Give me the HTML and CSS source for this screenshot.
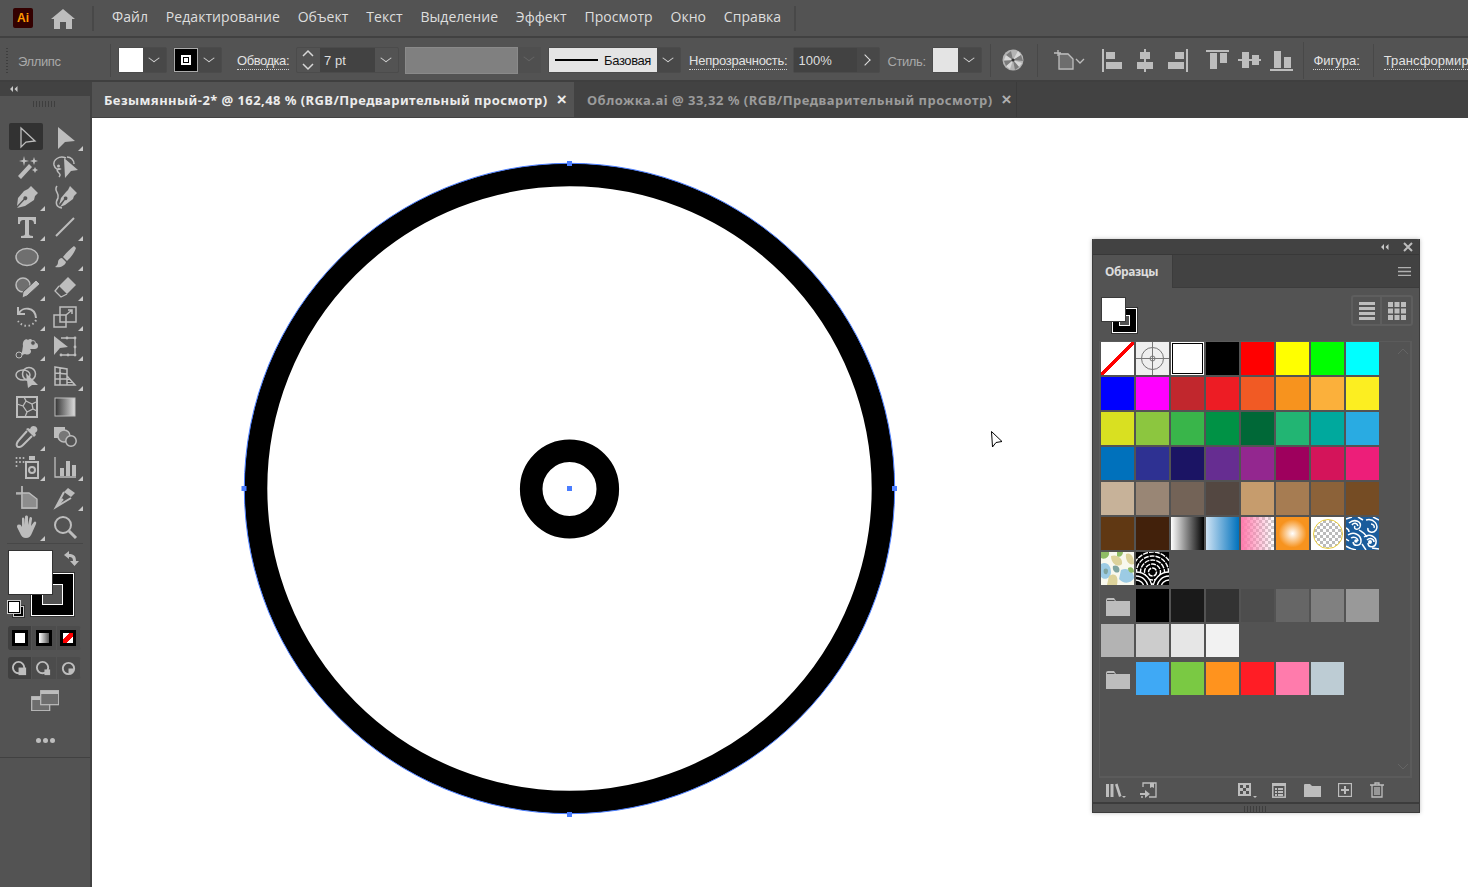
FILE: index.html
```html
<!DOCTYPE html>
<html lang="ru">
<head>
<meta charset="utf-8">
<title>Adobe Illustrator</title>
<link rel="stylesheet" href="styles.css">
</head>
<body>
<header class="menubar">
  <div class="ai-logo">Ai</div>
  <svg class="home" viewBox="0 0 24 20"><path d="M12 0 L24 10 L21 10 L21 20 L15 20 L15 13 L9 13 L9 20 L3 20 L3 10 L0 10Z"/></svg>
  <span class="vsep menu-sep"></span>
  <nav class="menu">
    <span>Файл</span><span>Редактирование</span><span>Объект</span><span>Текст</span><span>Выделение</span><span>Эффект</span><span>Просмотр</span><span>Окно</span><span>Справка</span>
  </nav>
  <span class="vsep menu-sep2"></span>
</header>

<section class="control">
  <span class="grip-v"></span>
  <span class="ctl-label shape-name">Эллипс</span>
  <span class="vsep c-sep1"></span>
  <div class="combo fillc"><span class="sw-white"></span><span class="chev"></span></div>
  <div class="combo strokec"><span class="sw-black"><i></i></span><span class="chev"></span></div>
  <span class="link-label ob">Обводка:</span>
  <div class="combo stepper">
    <span class="updown"><svg viewBox="0 0 12 22"><path d="M1 7 L6 2 L11 7 M1 15 L6 20 L11 15"/></svg></span>
    <span class="value v7">7 pt</span><span class="chev"></span>
  </div>
  <div class="graybox"></div><div class="dis-chev"><span class="chev dim"></span></div>
  <div class="combo linec"><span class="linebox"><i></i><b>Базовая</b></span><span class="chev"></span></div>
  <span class="link-label op">Непрозрачность:</span>
  <div class="combo opac"><span class="value v100">100%</span><span class="arrow-r"></span></div>
  <span class="ctl-label stl">Стиль:</span>
  <div class="combo stylec"><span class="sw-style"></span><span class="chev"></span></div>
  <span class="vsep c-sep2"></span>
  <svg class="globe" viewBox="0 0 22 22"><circle cx="11" cy="11" r="10.5" fill="#b4b4b4"/><path d="M11 11 L4 6 L2 11Z M11 11 L16 2 L19 6Z M11 11 L20 14 L17 18Z M11 11 L8 20 L4 17Z" fill="#d8d8d8"/><path d="M11 11 L9 2 L4 6Z M11 11 L19 6 L21 12Z M11 11 L13 21 L17 18Z M11 11 L2 12 L4 17Z" fill="#7c7c7c"/><circle cx="11" cy="11" r="1.6" fill="#333"/></svg>
  <span class="vsep c-sep3"></span>
  <svg class="artb" viewBox="0 0 32 22"><path class="ic-s" d="M1 4 H8 M5 1 V7"/><path class="ic-f" d="M6 4 H15 L20 9 V19 H6Z" fill-opacity=".25"/><path class="ic-s" d="M6 5 H15 L20 10 V20 H6Z"/><path class="ic-s" d="M23 10 L27 14 L31 10"/></svg>
  <div class="aligns">
    <svg viewBox="0 0 24 24"><path d="M1 1 H3 V24 H1Z M5 4 H14 V11 H5Z M5 14 H21 V21 H5Z"/></svg>
    <svg viewBox="0 0 24 24"><path d="M11 1 H13 V24 H11Z M7 4 H17 V11 H7Z M4 14 H20 V21 H4Z"/></svg>
    <svg viewBox="0 0 24 24"><path d="M21 1 H23 V24 H21Z M10 4 H19 V11 H10Z M3 14 H19 V21 H3Z"/></svg>
    <svg class="gap-l" viewBox="0 0 24 24"><path d="M1 2 H24 V4 H1Z M5 5 H12 V21 H5Z M15 5 H22 V15 H15Z"/></svg>
    <svg viewBox="0 0 24 24"><path d="M1 11 H24 V13 H1Z M5 4 H12 V20 H5Z M15 7 H22 V17 H15Z"/></svg>
    <svg viewBox="0 0 24 24"><path d="M1 21 H24 V23 H1Z M5 3 H12 V20 H5Z M15 9 H22 V20 H15Z"/></svg>
  </div>
  <span class="vsep c-sep4"></span>
  <span class="link-label fig">Фигура:</span>
  <span class="vsep c-sep5"></span>
  <span class="link-label trf">Трансформирование</span>
</section>

<div class="workspace">
  <aside class="toolbar">
    <div class="tb-head"><svg class="dbl" viewBox="0 0 8 6"><path d="M0 3 L3 0 V6Z M4.500 3 L7.500 0 V6Z"/></svg></div>
    <div class="tb-grip"><span class="grip-h"></span></div>
    <div class="tools">
      <div class="tool active"><svg viewBox="0 0 24 24"><path class="ic-s" d="M6 3 L20 16 L11 17 L6 22Z"/></svg></div>
      <div class="tool tri"><svg viewBox="0 0 24 24"><path d="M5 2 L22 16 L12 17 L5 24Z"/></svg></div>
      <div class="tool"><svg viewBox="0 0 24 24"><path d="M3 21 L14 9 L17 12 L6 24Z M9 1 L10 5 L14 6 L10 7 L9 11 L8 7 L4 6 L8 5Z M19 2 L20 5 L23 6 L20 7 L19 10 L18 7 L15 6 L18 5Z M20 12 L21 14 L23 15 L21 16 L20 18 L19 16 L17 15 L19 14Z"/></svg></div>
      <div class="tool"><svg viewBox="0 0 24 24"><path class="ic-s w15" d="M13 3 C6 0 0 5 1 10 C2 14 5 15 7 14 C5 13 3 15 5 17 C7 19 8 20 6 22"/><circle cx="5.500" cy="11" r="1.500"/><path d="M11 3 L25 15 L18 16 L12 23Z"/><path class="ic-s w15" d="M14 2 C18 2 21 5 21 9"/></svg></div>
      <div class="tool tri"><svg viewBox="0 0 24 24"><path d="M16 1 L23 8 L20 11 L19 15 L10 21 L2 23 L9.500 15 A2 2 0 1 0 8.500 14 L2 21 L3 13 L9 6 L13 4Z"/></svg></div>
      <div class="tool"><svg viewBox="0 0 24 24"><path d="M17 1 L24 8 L21 11 L20 14 L12 20 L7 22 L12 15 A1.800 1.800 0 1 0 11 14 L6 20 L8 13 L13 7 L15 5Z"/><path class="ic-s w15" d="M4 1 C0 6 7 8 5 13 C2 18 3 22 9 23"/></svg></div>
      <div class="tool tri"><svg viewBox="0 0 24 24"><path d="M3 2 H21 V9 H19 C19 6 18 5 15 5 H14 V19 C14 20 15 21 18 21 V23 H6 V21 C9 21 10 20 10 19 V5 H9 C6 5 5 6 5 9 H3Z"/></svg></div>
      <div class="tool tri"><svg viewBox="0 0 24 24"><path class="ic-s w2" d="M3 21 L21 3"/></svg></div>
      <div class="tool tri"><svg viewBox="0 0 24 24"><ellipse class="ic-e" cx="12" cy="12" rx="11" ry="8.500"/></svg></div>
      <div class="tool tri"><svg viewBox="0 0 24 24"><path d="M21 1 L23 3 C21 9 17 13 14 16 L10 12 C13 8 17 4 21 1Z M9 13 L13 17 C12 21 7 23 2 22 C5 20 5 18 5 17 C5 15 7 13 9 13Z"/></svg></div>
      <div class="tool tri"><svg viewBox="0 0 24 24"><circle class="ic-e" cx="8" cy="10" r="7"/><path d="M21 5 L25 9 L12 21 L7 23 L8 17Z" stroke="#535353"/></svg></div>
      <div class="tool tri"><svg viewBox="0 0 24 24"><path d="M15 2 L23 10 L14 19 L6 11Z"/><path class="ic-s" d="M6 11 L2 16 L8 22 L14 19"/></svg></div>
      <div class="tool tri"><svg viewBox="0 0 24 24"><path class="ic-s w2" d="M4 8 C7 2 20 1 21 13"/><path class="ic-s w2" d="M3 2 V9 H10"/><path class="ic-s w2" stroke-dasharray="1.500 2.600" d="M21 15 C18 22 8 23 3 16"/></svg></div>
      <div class="tool tri"><svg viewBox="0 0 24 24"><rect class="ic-s w15" x="7" y="2" width="16" height="15"/><rect class="ic-s w15" x="1" y="10" width="12" height="12"/><path d="M13 10 L19 5 M15 5 H19 V9" class="ic-s w15"/></svg></div>
      <div class="tool tri"><svg viewBox="0 0 24 24"><path d="M3 19 C8 20 7 15 8 11 C7 6 11 3 13 5 C15 3 18 4 17 7 C20 8 23 7 23 11 C23 15 18 14 15 14 C18 17 14 21 10 19 C8 19 6 22 3 22Z"/><circle cx="4" cy="20" r="3" fill="#535353" stroke="#bdbdbd"/><circle cx="18" cy="8" r="2.400" fill="#535353" stroke="#bdbdbd"/></svg></div>
      <div class="tool tri"><svg viewBox="0 0 24 24"><path d="M1 1 L15 12 L7 13 L1 20Z"/><path class="ic-s" d="M8 3 H22 V20 H8"/><g class="dots"><circle cx="14" cy="3" r="1.400"/><circle cx="22" cy="3" r="1.400"/><circle cx="22" cy="12" r="1.400"/><circle cx="22" cy="20" r="1.400"/><circle cx="15" cy="20" r="1.400"/><circle cx="8" cy="20" r="1.400"/></g></svg></div>
      <div class="tool tri"><svg viewBox="0 0 24 24"><ellipse class="ic-s w15" cx="8" cy="10" rx="7" ry="5"/><circle class="ic-s w15" cx="14" cy="9" r="6.500"/><path d="M11 8 L23 20 L17 20 L13 23Z"/></svg></div>
      <div class="tool tri"><svg viewBox="0 0 24 24"><path class="ic-s w15" d="M2 2 L14 4 V20 H2Z M2 8 L14 9 M2 14 H14 M7 3 V20 M14 11 L22 20 H14"/><path d="M14 14 H18 V15 H14Z M14 17 H20 V18 H14Z"/></svg></div>
      <div class="tool"><svg viewBox="0 0 24 24"><rect class="ic-s w2" x="2" y="2" width="20" height="20"/><path class="ic-s" d="M2 9 L8 11 L11 6 L9 2 M11 6 L17 9 L21 7 M8 11 L12 17 L10 22 M12 17 L18 14 L22 16 M17 9 L18 14"/></svg></div>
      <div class="tool"><svg viewBox="0 0 24 24"><defs><linearGradient id="gtool"><stop offset="0" stop-color="#333"/><stop offset="1" stop-color="#ddd"/></linearGradient></defs><rect x="2" y="3" width="20" height="18" fill="url(#gtool)" stroke="#bdbdbd"/></svg></div>
      <div class="tool tri"><svg viewBox="0 0 24 24"><path d="M16 2 C18 0 21 1 22 3 C23 5 22 7 20 8 L21 10 L19 12 L11 4 L13 3 L15 4Z"/><path class="ic-s w2" d="M12 6 L4 15 C2 17 1 20 2 21 C3 23 6 22 8 20 L17 11"/></svg></div>
      <div class="tool"><svg viewBox="0 0 24 24"><rect x="1" y="2" width="11" height="11"/><circle cx="11" cy="11" r="6" fill="#777" stroke="#bdbdbd" stroke-width="1.500"/><circle cx="18" cy="16" r="5.200" fill="#535353" stroke="#bdbdbd" stroke-width="1.500"/></svg></div>
      <div class="tool tri"><svg viewBox="0 0 24 24"><g class="dots"><circle cx="1.500" cy="3" r="1"/><circle cx="5" cy="3" r="1"/><circle cx="8.500" cy="3" r="1"/><circle cx="1.500" cy="7" r="1"/><circle cx="5" cy="7" r="1"/><circle cx="8.500" cy="7" r="1"/><circle cx="1.500" cy="11" r="1"/></g><path d="M14 1 H20 V5 H14Z"/><rect class="ic-s w2" x="11" y="7" width="12" height="16"/><circle class="ic-s w2" cx="17" cy="15" r="3"/></svg></div>
      <div class="tool tri"><svg viewBox="0 0 24 24"><path class="ic-s" d="M2 2 V22 H23"/><path d="M7 13 H11 V21 H7Z M13 6 H17 V21 H13Z M19 10 H23 V21 H19Z"/></svg></div>
      <div class="tool"><svg viewBox="0 0 24 24"><path d="M6 1 H8 V8 H15 L22 14 V24 H6 V10 H1 V8 H6Z" fill-opacity=".55"/><path class="ic-s" d="M1 8 H14 L22 14 V23 H7 V1"/></svg></div>
      <div class="tool tri"><svg viewBox="0 0 24 24"><path d="M15 3 L22 8 L18 12 L11 7Z"/><path class="ic-s w2" d="M11 7 L3 22 L18 13 M3 22 L10 14"/></svg></div>
      <div class="tool tri"><svg viewBox="0 0 24 24"><path d="M4 10 C5 9 6 10 7 12 L7 4 C7 2 9 2 9.500 4 L10 10 L10 2 C10 0 13 0 13 2 L13 10 L14.500 3 C15 1 17.500 2 17 4 L16 11 L19 7 C20 5.500 22 7 21 9 L17 18 C16 21 14 23 11 23 C8 23 6 21 5 18 L2 12 C2 10 3 9 4 10Z"/></svg></div>
      <div class="tool"><svg viewBox="0 0 24 24"><circle class="ic-s w2" cx="10" cy="10" r="8"/><path class="ic-s w3" d="M16 16 L23 23"/></svg></div>
    </div>
    <hr class="tb-div">
    <div class="well">
      <div class="well-stroke"><i></i></div>
      <div class="well-fill"></div>
      <svg class="swap" viewBox="0 0 16 16"><path d="M1 4 L6 0 V3 C11 3 13 5 13 10 H16 L11.500 15 L7 10 H10 C10 7 9 6 6 6 V8Z"/></svg>
      <div class="mini"><span class="mini-s"></span><span class="mini-f"></span></div>
    </div>
    <div class="btn-row mode-a">
      <span class="on"><i class="box-fill"></i></span><span><i class="box-grad"></i></span><span><i class="box-none"></i></span>
    </div>
    <div class="btn-row mode-b">
      <span class="on"><svg viewBox="0 0 18 18"><circle class="ic-s w2" cx="8" cy="8" r="6"/><rect x="8" y="8" width="8" height="8"/></svg></span>
      <span><svg viewBox="0 0 18 18"><circle class="ic-s w2" cx="8" cy="8" r="6"/><rect x="10" y="10" width="6" height="6"/></svg></span>
      <span><svg viewBox="0 0 18 18"><circle class="ic-s w2" cx="9" cy="9" r="6"/><path d="M9 9 H15 A6 6 0 0 1 9 15Z"/></svg></span>
    </div>
    <svg class="screenmode" viewBox="0 0 28 21"><rect x="0.700" y="6.700" width="18" height="14" fill="#6e6e6e" stroke="#bdbdbd" stroke-width="1.200"/><rect x="9.700" y="0.700" width="18" height="14" fill="#6e6e6e" stroke="#bdbdbd" stroke-width="1.200"/><rect x="10" y="1" width="17.500" height="3" fill="#bdbdbd"/><rect x="1" y="7" width="8" height="3" fill="#bdbdbd"/></svg>
    <div class="more"><i></i><i></i><i></i></div>
    <hr class="tb-div2">
  </aside>

  <main class="doc">
    <div class="tabs">
      <div class="tab tab-on"><span>Безымянный-2* @ 162,48 % (RGB/Предварительный просмотр)</span><b>×</b></div>
      <div class="tab tab-off"><span>Обложка.ai @ 33,32 % (RGB/Предварительный просмотр)</span><b>×</b></div>
    </div>
    <div class="canvas">
      <svg class="art" viewBox="92 118 1376 769">
        <circle cx="569.500" cy="488.500" r="313.600" fill="#fff" stroke="#000" stroke-width="22.800"/>
        <circle cx="569.500" cy="489" r="38.300" fill="#fff" stroke="#000" stroke-width="22.600"/>
        <circle cx="569.500" cy="488.500" r="325.200" fill="none" stroke="#4a7dff" stroke-width="1"/>
        <path fill="#4a7dff" d="M567 161 h5 v5 h-5Z M567 812 h5 v5 h-5Z M241.500 486 h5 v5 h-5Z M892 486 h5 v5 h-5Z M567 486 h5 v5 h-5Z"/>
        <path d="M991.500 431.500 L1002 441.500 L996 442.500 L992.500 447Z" fill="#fff" stroke="#000" stroke-width="1"/>
      </svg>

      <aside class="panel">
        <div class="p-top"><svg class="dbl" viewBox="0 0 8 6"><path d="M0 3 L3 0 V6Z M4.500 3 L7.500 0 V6Z"/></svg><svg class="p-x" viewBox="0 0 10 10"><path d="M1 1 L9 9 M9 1 L1 9"/></svg></div>
        <div class="p-tabs">
          <div class="p-tab">Образцы</div>
          <svg class="p-menu" viewBox="0 0 13 9"><path d="M0 0.500 H13 M0 4.500 H13 M0 8.500 H13"/></svg>
        </div>
        <div class="p-tools">
          <div class="p-well"><span class="pw-s"><i></i></span><span class="pw-f"></span></div>
          <div class="viewbtns">
            <span><svg viewBox="0 0 16 18"><path d="M0 0 H16 V3 H0Z M0 5 H16 V8 H0Z M0 10 H16 V13 H0Z M0 15 H16 V18 H0Z"/></svg></span>
            <span><svg viewBox="0 0 18 18"><path d="M0 0 H5 V5 H0Z M6.500 0 H11.500 V5 H6.500Z M13 0 H18 V5 H13Z M0 6.500 H5 V11.500 H0Z M6.500 6.500 H11.500 V11.500 H6.500Z M13 6.500 H18 V11.500 H13Z M0 13 H5 V18 H0Z M6.500 13 H11.500 V18 H6.500Z M13 13 H18 V18 H13Z"/></svg></span>
          </div>
        </div>
        <div class="list">
          <div class="swgrid">
            <span class="sw s-none"></span>
            <span class="sw s-reg"><svg viewBox="0 0 33 33"><path d="M0 16.500 H33 M16.500 0 V33" stroke="#777" fill="none"/><circle cx="16.500" cy="16.500" r="11" fill="none" stroke="#777"/><circle cx="16.500" cy="16.500" r="2.500" fill="none" stroke="#777"/></svg></span>
            <span class="sw s-whitebox"></span>
            <span class="sw" style="background:#000"></span><span class="sw" style="background:#f00"></span><span class="sw" style="background:#ff0"></span><span class="sw" style="background:#0f0"></span><span class="sw" style="background:#0ff"></span>
            <span class="sw" style="background:#00f"></span><span class="sw" style="background:#f0f"></span><span class="sw" style="background:#c1272d"></span><span class="sw" style="background:#ed1c24"></span><span class="sw" style="background:#f15a24"></span><span class="sw" style="background:#f7931e"></span><span class="sw" style="background:#fbb03b"></span><span class="sw" style="background:#fcee21"></span>
            <span class="sw" style="background:#d9e021"></span><span class="sw" style="background:#8cc63f"></span><span class="sw" style="background:#39b54a"></span><span class="sw" style="background:#009245"></span><span class="sw" style="background:#006837"></span><span class="sw" style="background:#22b573"></span><span class="sw" style="background:#00a99d"></span><span class="sw" style="background:#29abe2"></span>
            <span class="sw" style="background:#0071bc"></span><span class="sw" style="background:#2e3192"></span><span class="sw" style="background:#1b1464"></span><span class="sw" style="background:#662d91"></span><span class="sw" style="background:#93278f"></span><span class="sw" style="background:#9e005d"></span><span class="sw" style="background:#d4145a"></span><span class="sw" style="background:#ed1e79"></span>
            <span class="sw" style="background:#c7b299"></span><span class="sw" style="background:#998675"></span><span class="sw" style="background:#736357"></span><span class="sw" style="background:#534741"></span><span class="sw" style="background:#c69c6d"></span><span class="sw" style="background:#a67c52"></span><span class="sw" style="background:#8c6239"></span><span class="sw" style="background:#754c24"></span>
            <span class="sw" style="background:#603813"></span><span class="sw" style="background:#42210b"></span>
            <span class="sw s-g1"></span><span class="sw s-g2"></span><span class="sw s-g3"></span><span class="sw s-g4"></span>
            <span class="sw s-ring"><i></i></span>
            <span class="sw s-swirl"><svg viewBox="0 0 33 33"><rect width="33" height="33" fill="#1a5c9c"/><g fill="none" stroke="#fff" stroke-width="1.500"><path d="M3 6 C9 1 16 5 14 10 C12 14 7 12 9 9"/><path d="M20 3 C28 1 33 8 30 13 C27 17 21 15 22 11"/><path d="M2 18 C8 14 15 18 15 24 C15 29 8 30 7 25"/><path d="M18 20 C24 16 31 20 30 26 C29 31 22 31 22 26"/><path d="M0 29 C3 31 6 32 10 33 M13 13 C16 15 19 16 21 20 M0 11 C2 12 3 14 3 15 M0 2 L6 0 M12 0 L17 3 M27 0 L33 3 M16 27 L20 33 M26 31 L33 32 M0 22 L3 24"/><path d="M6 8 C8 5 11 6 12 9 M25 7 C27 7 29 9 28 11 M5 21 C8 19 12 21 12 24 M21 23 C24 20 28 22 28 25"/></g><circle cx="24" cy="25" r="2" fill="#fff"/><circle cx="10" cy="24" r="1.800" fill="#fff"/></svg></span>
            <span class="sw s-camo"><svg viewBox="0 0 33 33"><rect width="33" height="33" fill="#f8f8ee"/><path fill="#9ccbe4" d="M0 12 C6 9 10 14 10 20 C10 26 4 29 0 25Z M20 18 C26 15 33 19 33 26 C30 32 22 32 18 27Z"/><path fill="#dcd29a" d="M10 4 C16 2 22 6 21 12 C17 16 10 12 10 4Z M8 24 C14 20 18 24 16 33 H6Z M25 2 C29 0 33 4 33 12 C28 14 24 8 25 2Z"/><path fill="#8fbc65" d="M0 0 H8 C9 5 4 8 0 6Z M16 0 H22 C22 4 18 6 16 4Z M27 16 C30 14 33 16 33 20 C30 22 27 20 27 16Z"/><path fill="#7fa5a0" d="M12 14 C16 12 20 16 18 20 C14 22 11 18 12 14Z M3 17 C7 15 8 19 6 22 C3 23 2 20 3 17Z"/></svg></span>
            <span class="sw s-wave"><svg viewBox="0 0 33 33"><rect width="33" height="33" fill="#000"/><g fill="none" stroke="#fff" stroke-width="1.400" stroke-dasharray="5 1"><circle cx="16.500" cy="20" r="4"/><circle cx="16.500" cy="20" r="8"/><circle cx="16.500" cy="20" r="12"/><circle cx="16.500" cy="20" r="16"/><circle cx="16.500" cy="20" r="20"/></g><g fill="#000" stroke="#fff" stroke-width="1.400"><circle cx="0" cy="36" r="16"/><circle cx="33" cy="36" r="16"/></g><g fill="none" stroke="#fff" stroke-width="1.400"><circle cx="0" cy="36" r="12"/><circle cx="0" cy="36" r="8"/><circle cx="33" cy="36" r="12"/><circle cx="33" cy="36" r="8"/></g></svg></span>
          </div>
          <div class="swgrid group">
            <span class="folder"><svg viewBox="0 0 24 18"><path d="M0 2 Q0 0 2 0 H8 L10 3 H24 V18 H0Z"/><path d="M1 2 H8 L9 3 H1Z" fill="#535353"/></svg></span>
            <span class="sw" style="background:#000"></span><span class="sw" style="background:#1a1a1a"></span><span class="sw" style="background:#333"></span><span class="sw" style="background:#4d4d4d"></span><span class="sw" style="background:#666"></span><span class="sw" style="background:#808080"></span><span class="sw" style="background:#999"></span>
            <span class="sw" style="background:#b3b3b3"></span><span class="sw" style="background:#ccc"></span><span class="sw" style="background:#e6e6e6"></span><span class="sw" style="background:#f2f2f2"></span>
          </div>
          <div class="swgrid group">
            <span class="folder"><svg viewBox="0 0 24 18"><path d="M0 2 Q0 0 2 0 H8 L10 3 H24 V18 H0Z"/><path d="M1 2 H8 L9 3 H1Z" fill="#535353"/></svg></span>
            <span class="sw" style="background:#3fa9f5"></span><span class="sw" style="background:#7ac943"></span><span class="sw" style="background:#ff931e"></span><span class="sw" style="background:#ff1d25"></span><span class="sw" style="background:#ff7bac"></span><span class="sw" style="background:#bdccd4"></span>
          </div>
          <svg class="sc-up" viewBox="0 0 10 6"><path d="M0 6 L5 1 L10 6"/></svg>
          <svg class="sc-down" viewBox="0 0 10 6"><path d="M0 0 L5 5 L10 0"/></svg>
        </div>
        <div class="p-foot">
          <svg class="f-a" viewBox="0 0 20 15"><path d="M0 1 H3 V14 H0Z M4.500 1 H7.500 V14 H4.500Z M9 1.500 L11.500 0.500 L15.500 13 L13 14Z M16 13 H20 L18 15Z"/></svg>
          <svg class="f-b" viewBox="0 0 17 16"><path class="ic-s" d="M3 5 V1 H16 V15 H9 M3 15 H1"/><path d="M10 1 H14 V6 L12 5 L10 6Z M0 11 H5 V8 L10 12 L5 16 V13 H0Z"/></svg>
          <svg class="f-c" viewBox="0 0 20 15"><path d="M0 0 H13 V13 H0Z"/><path fill="#535353" d="M2 2 H5 V5 H2Z M8 2 H11 V5 H8Z M5 5 H8 V8 H5Z M8 8 H11 V11 H8Z M2 8 H5 V11 H2Z"/><path d="M15 13 H19 L17 15Z"/></svg>
          <svg class="f-d" viewBox="0 0 14 15"><rect class="ic-s w15" x="0.800" y="0.800" width="12.400" height="13.400"/><path d="M0 0 H14 V3 H0Z M3 5 H5 V7 H3Z M6 5 H11 V7 H6Z M3 8 H5 V10 H3Z M6 8 H11 V10 H6Z M3 11 H5 V13 H3Z M6 11 H11 V13 H6Z"/></svg>
          <svg class="f-e" viewBox="0 0 17 13"><path d="M0 1 Q0 0 1 0 H6 L8 2 H17 V13 H0Z"/></svg>
          <svg class="f-f" viewBox="0 0 14 14"><rect class="ic-s" x="0.500" y="0.500" width="13" height="13"/><path d="M6 3 H8 V6 H11 V8 H8 V11 H6 V8 H3 V6 H6Z"/></svg>
          <svg class="f-g" viewBox="0 0 14 16"><path class="ic-s" d="M0 3 H14 M5 3 V1 H9 V3 M2 3 V15 H12 V3 M5 5 V13 M7 5 V13 M9 5 V13"/></svg>
        </div>
        <div class="p-grip"><span class="grip-h dark"></span></div>
      </aside>
    </div>
  </main>
</div>
</body>
</html>
```

FILE: styles.css
```css
* { box-sizing: border-box; }
html, body { margin: 0; height: 100%; overflow: hidden; }
body { background: #535353; color: #dcdcdc; font-family: "Noto Sans", sans-serif; font-size: 13px; width: 1468px; height: 887px; }

svg { display: block; fill: #bdbdbd; }
.ic-s { fill: none; stroke: #bdbdbd; stroke-width: 1.3; }
.ic-s.w2 { stroke-width: 2; }
.ic-s.w3 { stroke-width: 3; }
.ic-s.w15 { stroke-width: 1.5; }
.ic-f { fill: #bdbdbd; }
.ic-e { fill: #6f6f6f; stroke: #bdbdbd; stroke-width: 1.5; }
.dots { fill: #bdbdbd; }
.tool svg { overflow: visible; }

.vsep { display: block; width: 1px; background: #484848; flex: none; }

/* menu bar */
.menubar { height: 38px; border-bottom: 2px solid #414141; display: flex; align-items: center; position: relative; }
.ai-logo { width: 20px; height: 20px; margin-left: 13px; background: #330000; color: #ff9a00; font: bold 12px/20px "Liberation Sans", sans-serif; text-align: center; border-radius: 2px; }
.home { width: 24px; height: 20px; margin-left: 18px; margin-top: 2px; }
.menu-sep { height: 25px; margin-left: 17px; width: 2px; }
.menu-sep2 { height: 25px; margin-left: 13px; width: 2px; }
.menu { display: flex; gap: 17.8px; margin-left: 18px; margin-top: -3px; font-size: 14px; letter-spacing: .05px; color: #dedede; font-family: "Open Sans", sans-serif; }

/* control bar */
.control { height: 44px; border-bottom: 2px solid #3f3f3f; display: flex; align-items: center; overflow: hidden; font-family: "Liberation Sans", sans-serif; padding-top: 2px; }
.grip-v { width: 2px; height: 25px; margin-left: 6px; flex: none; background: repeating-linear-gradient(#3e3e3e 0 1px, transparent 1px 3px); }
.ctl-label { color: #a9a9a9; font-size: 13px; letter-spacing: -0.4px; flex: none; margin-top: 2px; }
.shape-name { margin-left: 10px; width: 84px; }
.c-sep1 { height: 33px; margin-left: 8px; }
.combo { display: flex; align-items: center; height: 26px; background: #484848; border: 1px solid #4b4b4b; border-radius: 2px; flex: none; }
.chev { width: 23px; height: 24px; position: relative; flex: none; }
.chev::after { content: ""; position: absolute; left: 7px; top: 6px; width: 7px; height: 7px; border-right: 1.6px solid #d8d8d8; border-bottom: 1.6px solid #d8d8d8; transform: scaleY(.75) rotate(45deg); }
.chev.dim::after { border-color: #666; }
.fillc { margin-left: 7px; }
.sw-white { width: 24px; height: 24px; background: #fff; flex: none; }
.strokec { margin-left: 6px; }
.sw-black { width: 24px; height: 24px; background: #000; border: 1px solid #aaa; display: flex; align-items: center; justify-content: center; flex: none; }
.sw-black i { width: 10px; height: 10px; border: 2px solid #fff; background: #000; display: block; box-shadow: inset 0 0 0 1px #000, inset 0 0 0 4px #fff; }
.link-label { flex: none; font-size: 13px; color: #e2e2e2; letter-spacing: -0.45px; border-bottom: 1px dotted #d0d0d0; line-height: 14px; padding-bottom: 1px; margin-top: 3px; }
.ob { margin-left: 15px; }
.stepper { margin-left: 7px; background: #535353; }
.updown { width: 22px; height: 24px; display: block; padding: 1px 5px; flex: none; }
.updown svg { width: 12px; height: 22px; fill: none; stroke: #d8d8d8; stroke-width: 1.5; }
.value { display: block; height: 24px; background: #424242; color: #dedede; font-size: 13px; line-height: 26px; padding-left: 4px; flex: none; }
.v7 { width: 55px; margin-left: 1px; }
.graybox { width: 113px; height: 27px; margin-left: 6px; background: #808080; border: 1px solid #8a8a8a; flex: none; }
.dis-chev { width: 23px; height: 26px; background: #4f4f4f; flex: none; }
.linec { margin-left: 7px; background: #484848; }
.linebox { width: 108px; height: 24px; background: #e4e4e4; display: flex; align-items: center; flex: none; }
.linebox i { width: 43px; height: 2px; background: #000; margin-left: 6px; margin-top: -1px; }
.linebox b { font-weight: normal; color: #111; font-size: 13px; margin-left: 6px; margin-top: 1px; letter-spacing: -0.4px; }
.op { margin-left: 8px; letter-spacing: -0.25px; }
.opac { margin-left: 6px; }
.v100 { width: 63px; }
.arrow-r { width: 22px; height: 24px; position: relative; flex: none; }
.arrow-r::after { content: ""; position: absolute; left: 4px; top: 8px; width: 7px; height: 7px; border-right: 1.8px solid #e2e2e2; border-top: 1.8px solid #e2e2e2; transform: rotate(45deg); }
.stl { margin-left: 7px; width: 38px; }
.stylec { margin-left: 7px; }
.sw-style { width: 25px; height: 24px; background: #e4e4e4; flex: none; }
.c-sep2 { height: 33px; margin-left: 8px; }
.globe { width: 22px; height: 22px; margin-left: 11px; flex: none; }
.c-sep3 { height: 33px; margin-left: 13px; }
.artb { width: 32px; height: 22px; margin-left: 15px; flex: none; }
.aligns { display: flex; gap: 8px; margin-left: 16px; flex: none; }
.aligns svg { width: 24px; height: 24px; flex: none; }
.aligns .gap-l { margin-left: 8px; }
.c-sep4 { height: 37px; margin-left: 10px; }
.fig { margin-left: 9px; letter-spacing: 0; }
.c-sep5 { height: 33px; margin-left: 13px; }
.trf { margin-left: 10px; letter-spacing: .1px; }

/* workspace */
.workspace { display: flex; height: 805px; }
.toolbar { width: 92px; flex: none; border-right: 2px solid #424242; background: #535353; position: relative; }
.tb-head { height: 14px; background: #424242; padding: 4px 0 0 10px; }
.dbl { width: 8px; height: 6px; fill: #c8c8c8; flex: none; }
.tb-grip { height: 26px; padding-top: 5px; }
.grip-h { display: block; width: 24px; height: 6px; margin: 0 auto; background: repeating-linear-gradient(90deg, #3e3e3e 0 1px, transparent 1px 3px); }
.tools { display: grid; grid-template-columns: 38px 38px; grid-auto-rows: 30px; padding-left: 8px; }
.tool { display: flex; align-items: center; justify-content: center; position: relative; }
.tool svg { width: 24px; height: 24px; }
.tool.active::before { content: ""; position: absolute; left: 1px; top: 1px; width: 34px; height: 27px; background: #323232; border-radius: 2px; }
.tool.active svg { position: relative; }
.tool.tri::after { content: ""; position: absolute; right: 1px; bottom: 1px; border-style: solid; border-width: 0 0 5px 5px; border-color: transparent transparent #c8c8c8 transparent; }
.tb-div { border: 0; height: 1px; background: #474747; margin: 1px 7px 0; }
.well { position: relative; height: 76px; margin-top: 6px; }
.well-fill { position: absolute; left: 8px; top: 0; width: 45px; height: 45px; background: #fff; border: 1px solid #333; }
.well-stroke { position: absolute; left: 31px; top: 23px; width: 43px; height: 43px; background: #000; border: 1px solid #fff; outline: 1px solid #333; }
.well-stroke i { display: block; position: absolute; left: 10px; top: 10px; width: 21px; height: 21px; background: #535353; border: 1px solid #fff; }
.swap { position: absolute; left: 63px; top: 1px; width: 16px; height: 16px; }
.mini { position: absolute; left: 8px; top: 51px; width: 16px; height: 16px; }
.mini-s { position: absolute; right: 0; bottom: 0; width: 11px; height: 11px; background: #000; border: 1px solid #ccc; outline: 1px solid #333; }
.mini-f { position: absolute; left: 1px; top: 1px; width: 10px; height: 10px; background: #fff; outline: 1px solid #000; box-shadow: 0 0 0 2px #ccc; }
.btn-row { display: flex; width: 73px; margin-left: 8px; background: #4c4c4c; border-radius: 3px; overflow: hidden; }
.btn-row span { width: 24.33px; display: flex; align-items: center; justify-content: center; border-right: 1px solid #535353; }
.btn-row span.on { background: #404040; }
.mode-a { height: 24px; }
.mode-b { height: 22px; margin-top: 7px; }
.mode-b svg { width: 17px; height: 17px; }
.mode-b .on { background: #363636; }
.btn-row i { display: block; width: 16px; height: 16px; border: 3px solid #000; }
.box-fill { background: #fff; }
.box-grad { background: linear-gradient(90deg, #fff, #555); }
.box-none { background: linear-gradient(135deg, #fff 34%, #f00 34% 66%, #fff 66%); }
.screenmode { width: 28px; height: 21px; margin: 11px 0 0 31px; }
.more { display: flex; gap: 2px; margin: 27px 0 0 36px; }
.more i { width: 5px; height: 5px; border-radius: 50%; background: #bdbdbd; }
.tb-div2 { border: 0; height: 1px; background: #414141; margin: 14px 0 0; }

/* document */
.doc { flex: 1; min-width: 0; display: flex; flex-direction: column; }
.tabs { height: 36px; background: #424242; display: flex; flex: none; }
.tab { height: 35px; display: flex; align-items: center; font: bold 13px "Noto Sans", sans-serif; letter-spacing: .43px; flex: none; }
.tab b { font: bold 17px/16px "Liberation Sans", sans-serif; margin-left: 9px; letter-spacing: 0; }
.tab-on { width: 482px; background: #535353; color: #ececec; padding-left: 12px; }
.tab-off { width: 443px; color: #9b9b9b; padding-left: 13px; border-right: 1px solid #3b3b3b; letter-spacing: .49px; }
.tab-off b { color: #b0b0b0; }
.canvas { flex: 1; background: #fff; position: relative; overflow: hidden; }
.art { position: absolute; left: 0; top: 0; width: 1376px; height: 769px; }

/* swatches panel */
.panel { position: absolute; left: 1000px; top: 121px; width: 328px; height: 574px; background: #535353; border: 1px solid #3c3c3c; border-top: 0; display: flex; flex-direction: column; box-shadow: 0 0 4px rgba(0,0,0,.25); }
.p-top { height: 16px; flex: none; background: #424242; border-bottom: 1px solid #383838; display: flex; align-items: center; justify-content: flex-end; border-radius: 3px 3px 0 0; }
.p-top .dbl { margin-right: 14px; }
.p-x { width: 10px; height: 10px; margin-right: 6px; fill: none; stroke: #bdbdbd; stroke-width: 2; }
.p-tabs { height: 33px; flex: none; background: #424242; border-bottom: 1px solid #3c3c3c; display: flex; align-items: center; justify-content: space-between; position: relative; }
.p-tab { width: 80px; height: 33px; background: #535353; border-right: 1px solid #3c3c3c; color: #dcdcdc; font: bold 12px/33px "Noto Sans", sans-serif; padding-left: 12px; letter-spacing: -0.4px; }
.p-menu { width: 13px; height: 9px; margin-right: 8px; fill: none; stroke: #b0b0b0; stroke-width: 1.4; }
.p-tools { height: 53px; flex: none; position: relative; }
.p-well { position: absolute; left: 8px; top: 9px; width: 36px; height: 36px; }
.pw-f { position: absolute; left: 0; top: 0; width: 25px; height: 25px; background: #fff; border: 1px solid #3a3a3a; }
.pw-s { position: absolute; right: 0; bottom: 0; width: 25px; height: 25px; background: #000; border: 1px solid #fff; outline: 1px solid #333; }
.pw-s i { position: absolute; left: 6px; top: 6px; width: 11px; height: 11px; background: #535353; border: 1px solid #fff; }
.viewbtns { position: absolute; right: 6px; top: 7px; width: 62px; height: 31px; border: 2px solid #5e5e5e; border-radius: 3px; display: flex; }
.viewbtns span { width: 30px; display: flex; align-items: center; justify-content: center; }
.viewbtns span:first-child { border-right: 2px solid #5e5e5e; }
.viewbtns svg { width: 16px; height: 18px; }
.viewbtns span + span svg { width: 18px; }
.list { flex: none; height: 437px; margin: 0 7px 0 6px; border: solid #5b5b5b; border-width: 1px 2px 2px 1px; position: relative; padding: 0 0 0 1px; }
.swgrid { display: grid; grid-template-columns: repeat(8, 33px); grid-auto-rows: 33px; gap: 2px; }
.swgrid.group { margin-top: 4px; }
.swgrid.group + .swgrid.group { margin-top: 5px; }
.sw { display: block; width: 33px; height: 33px; }
.sw svg { width: 33px; height: 33px; }
.s-none { background: linear-gradient(135deg, #fff calc(50% - 1.6px), #f00 calc(50% - 1.6px) calc(50% + 1.6px), #fff calc(50% + 1.6px)); }
.s-reg { background: #efefef; }
.s-whitebox { background: #fff; box-shadow: inset 0 0 0 1px #fff, inset 0 0 0 2px #000; }
.s-g1 { background: linear-gradient(90deg, #fff, #000); }
.s-g2 { background: linear-gradient(90deg, #cfe3f4, #0071bc); }
.s-g3 { background: linear-gradient(90deg, #ff7bac, rgba(255,123,172,0)), conic-gradient(#ccc 25%, #fff 25% 50%, #ccc 50% 75%, #fff 75%) 0 0 / 6px 6px; }
.s-g4 { background: radial-gradient(circle closest-side, #fff 0, #f7931e 85%); }
.s-ring { background: #fff; display: flex; align-items: center; justify-content: center; }
.s-ring i { display: block; width: 30px; height: 30px; border-radius: 50%; border: 1.5px solid #e8cb3a; background: conic-gradient(#bbb 25%, #fff 25% 50%, #bbb 50% 75%, #fff 75%) 0 0 / 6px 6px; }
.folder { display: flex; align-items: center; justify-content: center; width: 33px; height: 33px; padding-top: 2px; }
.folder svg { width: 24px; height: 18px; }
.sc-up { position: absolute; right: 2px; top: 6px; width: 10px; height: 6px; fill: none; stroke: #646464; stroke-width: 1; }
.sc-down { position: absolute; right: 2px; bottom: 6px; width: 10px; height: 6px; fill: none; stroke: #646464; stroke-width: 1; }
.p-foot { height: 26px; flex: none; display: flex; align-items: center; padding-left: 13px; border-bottom: 2px solid #3c3c3c; }
.p-foot svg { flex: none; }
.f-a { width: 20px; height: 15px; }
.f-b { width: 17px; height: 16px; margin-left: 14px; }
.f-c { width: 20px; height: 15px; margin-left: 81px; }
.f-d { width: 14px; height: 15px; margin-left: 14px; }
.f-e { width: 17px; height: 13px; margin-left: 18px; }
.f-f { width: 14px; height: 14px; margin-left: 17px; }
.f-g { width: 14px; height: 16px; margin-left: 18px; }
.p-grip { flex: 1; padding-top: 2px; }
.grip-h.dark { width: 24px; height: 6px; }
```
